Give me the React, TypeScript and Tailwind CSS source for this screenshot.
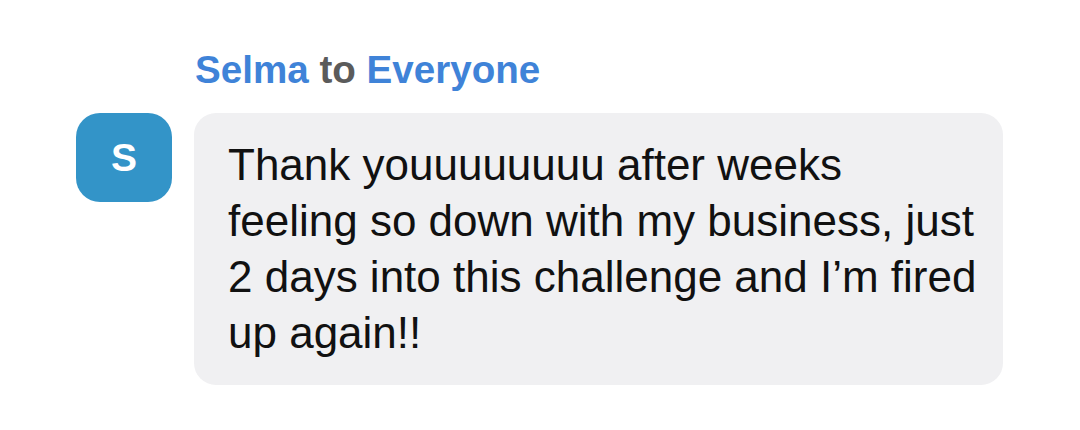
export default function App() {
  return (
    <div className="w-[1080px] h-[430px] bg-white" style={{ fontFamily: '"Liberation Sans", Arial, sans-serif' }}>
      <div className="pt-[50px] pl-[76px] grid grid-cols-[96px_809px] gap-x-[22px] gap-y-[24px]">
        <div />
        <p className="text-[38.6px] leading-[39px] font-bold text-[#3f83d8] pl-px">
          Selma <span className="text-[#5b5b5b]">to</span> Everyone
        </p>
        <div className="w-[96px] h-[89px] rounded-[24px] bg-[#3394c8] flex items-center justify-center">
          <span className="text-white font-bold text-[39px] leading-none">S</span>
        </div>
        <div className="w-[809px] rounded-[22px] bg-[#f0f0f2] pl-[34px] pr-[10px] py-6">
          <p className="text-[44px] leading-[56px] text-[#111111] whitespace-nowrap">
            Thank youuuuuuuu after weeks
            <br />
            feeling so down with my business, just
            <br />
            2 days into this challenge and I’m fired
            <br />
            up again!!
          </p>
        </div>
      </div>
    </div>
  );
}
